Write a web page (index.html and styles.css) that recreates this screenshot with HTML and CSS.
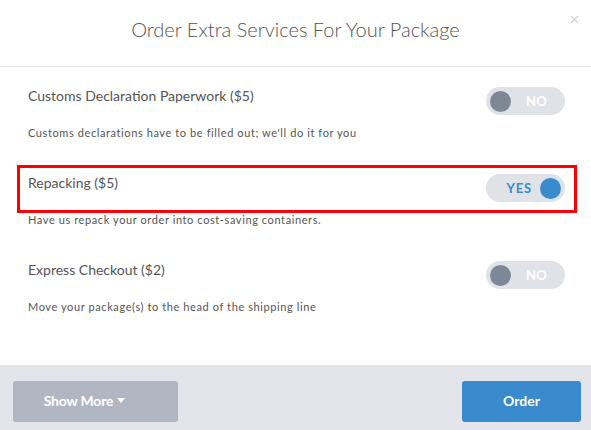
FILE: index.html
```html
<!DOCTYPE html>
<html>
<head>
<meta charset="utf-8">
<link rel="stylesheet" href="styles.css">
</head>
<body>
<div class="modal">
  <header class="modal-header">
    <h1 class="modal-title">Order Extra Services For Your Package</h1>
    <button class="close" aria-label="Close">
      <svg width="9" height="9" viewBox="0 0 9 9"><path d="M1 1L8 8M8 1L1 8" stroke="#d4d4d4" stroke-width="1.1" fill="none"/></svg>
    </button>
  </header>
  <div class="modal-body">
    <div class="option">
      <div class="option-head">
        <span class="option-label">Customs Declaration Paperwork ($5)</span>
        <span class="toggle off"><span class="knob"></span><span class="toggle-text">NO</span></span>
      </div>
      <p class="option-desc">Customs declarations have to be filled out; we'll do it for you</p>
    </div>
    <div class="option">
      <div class="option-head highlighted">
        <span class="option-label">Repacking ($5)</span>
        <span class="toggle on"><span class="toggle-text">YES</span><span class="knob"></span></span>
      </div>
      <p class="option-desc">Have us repack your order into cost-saving containers.</p>
    </div>
    <div class="option">
      <div class="option-head">
        <span class="option-label">Express Checkout ($2)</span>
        <span class="toggle off"><span class="knob"></span><span class="toggle-text">NO</span></span>
      </div>
      <p class="option-desc">Move your package(s) to the head of the shipping line</p>
    </div>
  </div>
  <footer class="modal-footer">
    <button class="btn btn-more">Show More <span class="caret"></span></button>
    <button class="btn btn-order">Order</button>
  </footer>
</div>
</body>
</html>
```
FILE: styles.css
```css
html, body {
  margin: 0;
  padding: 0;
  background: #fff;
}
body {
  font-family: "Lato", "Open Sans", sans-serif;
  color: #555;
}
.modal {
  width: 591px;
  height: 430px;
  display: flex;
  flex-direction: column;
}
.modal-header {
  position: relative;
  height: 66px;
  border-bottom: 1px solid #e6e6e6;
  display: flex;
  align-items: center;
  justify-content: center;
}
.modal-title {
  margin: 0;
  margin-top: -9px;
  font-weight: 300;
  font-size: 20px;
  color: #555;
  letter-spacing: 0;
}
.close {
  position: absolute;
  top: 15px;
  right: 12px;
  border: 0;
  background: none;
  padding: 0;
  width: 9px;
  height: 9px;
  line-height: 0;
}
.modal-body {
  flex: 1;
  padding: 11px 14px 0 17px;
  display: flex;
  flex-direction: column;
  gap: 26px;
}
.option-head {
  display: flex;
  justify-content: space-between;
  align-items: flex-start;
  padding: 6px 9px 8px 8px;
  border: 3px solid transparent;
}
.option-head.highlighted {
  border-color: #f00;
}
.option-label {
  font-size: 14px;
  line-height: 17px;
  margin-top: 0;
  color: #555;
}
.option-desc {
  margin: 0;
  padding-left: 11px;
  font-size: 11px;
  line-height: 13px;
  letter-spacing: 0.6px;
  color: #555;
}
.toggle {
  width: 79px;
  height: 28px;
  border-radius: 14px;
  background: #dfe2e6;
  display: flex;
  align-items: center;
  box-sizing: border-box;
  padding: 0 4px;
  font-weight: 700;
  font-size: 13px;
}
.knob {
  width: 21px;
  height: 21px;
  border-radius: 50%;
  flex: none;
}
.toggle.off .knob { background: #7d8896; }
.toggle.off .toggle-text { color: #fff; margin-left: 15px; letter-spacing: 0.3px; }
.toggle.on { justify-content: flex-end; }
.toggle.on .knob { background: #3a8bcd; }
.toggle.on .toggle-text { color: #3a8bcd; margin-right: 8px; letter-spacing: 0.8px; }
.modal-footer {
  height: 65px;
  background: #e4e5ea;
  box-sizing: border-box;
  padding: 16px 10px 0 13px;
  display: flex;
  justify-content: space-between;
  align-items: flex-start;
}
.btn {
  height: 41px;
  border: 0;
  border-radius: 3px;
  color: #fff;
  font-family: "Lato", "Open Sans", sans-serif;
  font-size: 14px;
  font-weight: 700;
  padding: 0 0 2px;
}
.btn-more {
  width: 165px;
  background: #b0b7c2;
  display: flex;
  align-items: center;
  justify-content: center;
  gap: 4px;
  padding-right: 22px;
  letter-spacing: -0.2px;
}
.caret {
  width: 0;
  height: 0;
  border-left: 4.5px solid transparent;
  border-right: 4.5px solid transparent;
  border-top: 5px solid #fff;
}
.btn-order {
  width: 119px;
  background: #3a8bcd;
}
```
